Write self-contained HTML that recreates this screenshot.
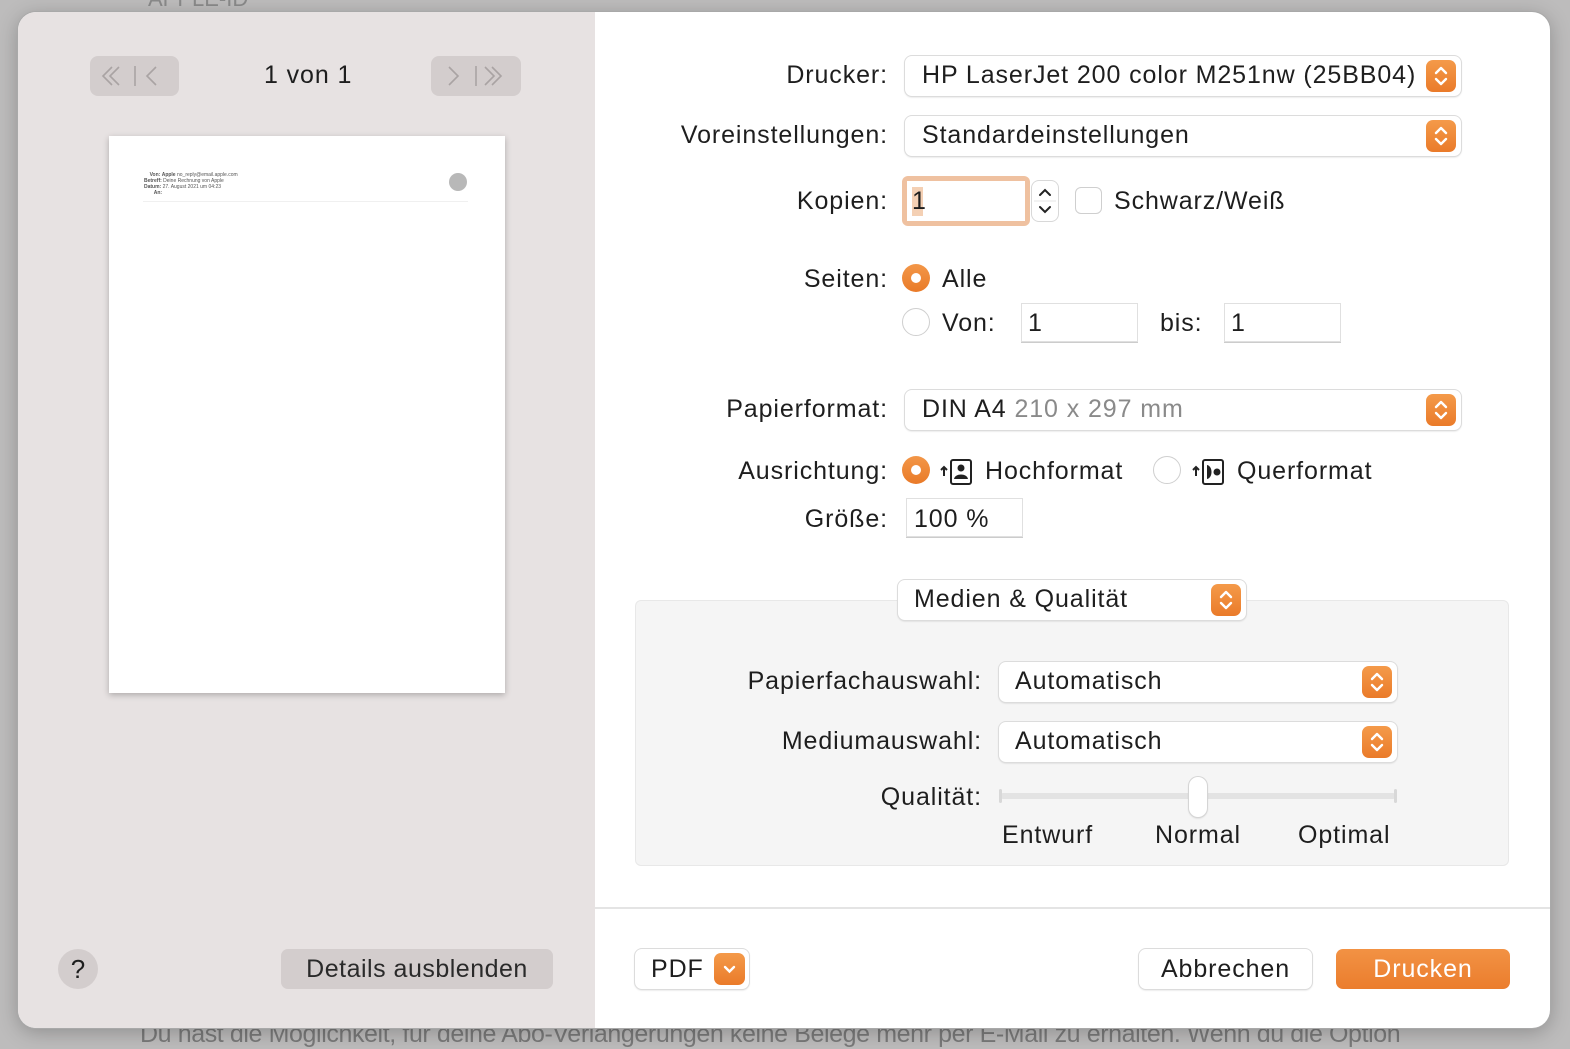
<!DOCTYPE html>
<html><head><meta charset="utf-8"><style>
*{box-sizing:border-box;margin:0;padding:0}
body{width:1570px;height:1048px;background:#bdbcbc;font-family:"Liberation Sans",sans-serif;color:#1e1e1e;position:relative;overflow:hidden}
.a{position:absolute;white-space:nowrap}
.t{font-size:25px;line-height:30px;letter-spacing:0.9px}
.r{text-align:right}
.win{position:absolute;left:18px;top:12px;width:1532px;height:1016px;border-radius:18px;background:#fff;overflow:hidden;box-shadow:0 0 0 1px #a9a9a9,0 4px 20px rgba(0,0,0,.25)}
.left{position:absolute;left:0;top:0;width:577px;height:1016px;background:#e7e2e2}
.pop{position:absolute;background:#fff;border-radius:7px;box-shadow:0 0 0 1px #dcdcdc,0 1px 2px rgba(0,0,0,.18)}
.st{position:absolute;width:30px;height:32px;border-radius:7px;background:linear-gradient(#f49a4a,#ea7b2a)}
.st svg{position:absolute;left:0;top:0}
.fld{position:absolute;background:#fff;border:1px solid #e0e0e0;box-shadow:0 1px 0 #ccc}
.rad{position:absolute;width:28px;height:28px;border-radius:50%}
.on{background:linear-gradient(#f39748,#e97a28)}
.on:after{content:"";position:absolute;left:9px;top:9px;width:10px;height:10px;border-radius:50%;background:#fff}
.off{background:#fff;border:1px solid #cfcfcf}
.btn{position:absolute;border-radius:7px;font-size:25px;line-height:40px;text-align:center;letter-spacing:0.9px}
</style></head><body>
<div class="a" style="left:148px;top:-14px;font-size:22px;color:#8a8a8a">APPLE-ID</div>
<div class="a" style="left:140px;top:1020px;font-size:25px;color:#7a7a7a;letter-spacing:-0.4px">Du hast die Möglichkeit, für deine Abo-Verlängerungen keine Belege mehr per E-Mail zu erhalten. Wenn du die Option</div>
<div class="win">
<div class="left"></div>
<div class="a" style="left:72px;top:44px;width:89px;height:40px;border-radius:8px;background:#d3cdcd"></div>
<svg class="a" style="left:72px;top:44px" width="89" height="40"><g stroke="#a9a3a3" stroke-width="1.6" fill="none"><path d="M22 11l-9 9 9 9M29 11l-9 9 9 9M66 11l-9 9 9 9"/><path d="M45 10v20"/></g></svg>
<div class="a" style="left:413px;top:44px;width:90px;height:40px;border-radius:8px;background:#d3cdcd"></div>
<svg class="a" style="left:413px;top:44px" width="90" height="40"><g stroke="#a9a3a3" stroke-width="1.6" fill="none"><path d="M18 11l9 9-9 9M54 11l9 9-9 9M61 11l9 9-9 9"/><path d="M45 10v20"/></g></svg>
<div class="a t" style="left:246px;top:48px;font-size:25px">1 von 1</div>
<div class="a" style="left:91px;top:124px;width:396px;height:557px;background:#fff;box-shadow:0 2px 6px rgba(0,0,0,.25)"></div>
<div class="a" style="left:126px;top:160px;font-size:5px;line-height:6px;color:#555">&nbsp;&nbsp;&nbsp;&nbsp;<b>Von:</b> <b>Apple</b> no_reply@email.apple.com<br><b>Betreff:</b> Deine Rechnung von Apple<br><b>Datum:</b> 27. August 2021 um 04:23<br>&nbsp;&nbsp;&nbsp;&nbsp;&nbsp;&nbsp;&nbsp;<b>An:</b></div>
<div class="a" style="left:431px;top:161px;width:18px;height:18px;border-radius:50%;background:#b8b8b8"></div>
<div class="a" style="left:125px;top:189px;width:325px;height:1px;background:#f0f0f0"></div>
<div class="a" style="left:40px;top:937px;width:40px;height:40px;border-radius:50%;background:#d3cdcd;font-size:26px;line-height:40px;text-align:center">?</div>
<div class="btn" style="left:263px;top:937px;width:272px;background:#d3cdcd;color:#2a2a2a;letter-spacing:0.5px">Details ausblenden</div>

<div class="a t r" style="left:500px;width:370px;top:48px">Drucker:</div>
<div class="pop" style="left:887px;top:44px;width:556px;height:40px"></div>
<div class="a t" style="left:904px;top:48px">HP LaserJet 200 color M251nw (25BB04)</div>
<div class="st" style="left:1408px;top:48px"><svg width="30" height="32"><path d="M10 13l5-5 5 5M10 19l5 5 5-5" stroke="#fff" stroke-width="2.4" fill="none" stroke-linecap="round" stroke-linejoin="round"/></svg></div>

<div class="a t r" style="left:500px;width:370px;top:108px">Voreinstellungen:</div>
<div class="pop" style="left:887px;top:104px;width:556px;height:40px"></div>
<div class="a t" style="left:904px;top:108px">Standardeinstellungen</div>
<div class="st" style="left:1408px;top:108px"><svg width="30" height="32"><path d="M10 13l5-5 5 5M10 19l5 5 5-5" stroke="#fff" stroke-width="2.4" fill="none" stroke-linecap="round" stroke-linejoin="round"/></svg></div>

<div class="a t r" style="left:500px;width:370px;top:174px">Kopien:</div>
<div class="a" style="left:884px;top:164px;width:128px;height:50px;border-radius:6px;background:#efc1a0"></div>
<div class="a" style="left:889px;top:169px;width:118px;height:40px;background:#fff"></div>
<div class="a" style="left:894px;top:175px;width:11px;height:29px;background:#f4d0b4"></div>
<div class="a t" style="left:894px;top:174px">1</div>
<div class="a" style="left:1014px;top:169px;width:26px;height:40px;border-radius:7px;background:#fff;box-shadow:0 0 0 1px #d8d8d8"></div>
<svg class="a" style="left:1014px;top:169px" width="26" height="40"><path d="M8 14l5-5 5 5M8 26l5 5 5-5" stroke="#222" stroke-width="2" fill="none" stroke-linecap="round"/><path d="M2 20h22" stroke="#e6e6e6"/></svg>
<div class="a" style="left:1057px;top:175px;width:27px;height:27px;border-radius:6px;background:#fff;border:1px solid #cfcfcf"></div>
<div class="a t" style="left:1096px;top:174px">Schwarz/Weiß</div>

<div class="a t r" style="left:500px;width:370px;top:252px">Seiten:</div>
<div class="rad on" style="left:884px;top:252px"></div>
<div class="a t" style="left:924px;top:252px">Alle</div>
<div class="rad off" style="left:884px;top:296px"></div>
<div class="a t" style="left:924px;top:296px">Von:</div>
<div class="fld" style="left:1003px;top:291px;width:117px;height:39px"></div>
<div class="a t" style="left:1010px;top:296px">1</div>
<div class="a t" style="left:1142px;top:296px">bis:</div>
<div class="fld" style="left:1206px;top:291px;width:117px;height:39px"></div>
<div class="a t" style="left:1213px;top:296px">1</div>

<div class="a t r" style="left:500px;width:370px;top:382px">Papierformat:</div>
<div class="pop" style="left:887px;top:378px;width:556px;height:40px"></div>
<div class="a t" style="left:904px;top:382px">DIN A4 <span style="color:#8a8a8a">210 x 297 mm</span></div>
<div class="st" style="left:1408px;top:382px"><svg width="30" height="32"><path d="M10 13l5-5 5 5M10 19l5 5 5-5" stroke="#fff" stroke-width="2.4" fill="none" stroke-linecap="round" stroke-linejoin="round"/></svg></div>

<div class="a t r" style="left:500px;width:370px;top:444px">Ausrichtung:</div>
<div class="rad on" style="left:884px;top:444px"></div>
<svg class="a" style="left:920px;top:444px" width="38" height="32"><path d="M6 20V11M3 14l3-3 3 3" stroke="#222" stroke-width="2" fill="none"/><rect x="13" y="4" width="20" height="24" rx="2" stroke="#222" stroke-width="2" fill="none"/><circle cx="23" cy="12" r="3.5" fill="#222"/><path d="M16 23c1-6 13-6 14 0z" fill="#222"/></svg>
<div class="a t" style="left:967px;top:444px">Hochformat</div>
<div class="rad off" style="left:1135px;top:444px"></div>
<svg class="a" style="left:1172px;top:444px" width="38" height="32"><path d="M6 20V11M3 14l3-3 3 3" stroke="#222" stroke-width="2" fill="none"/><rect x="13" y="4" width="20" height="24" rx="2" stroke="#222" stroke-width="2" fill="none"/><circle cx="27" cy="16" r="3.5" fill="#222"/><path d="M17 9c6 1 6 13 0 14z" fill="#222"/></svg>
<div class="a t" style="left:1219px;top:444px">Querformat</div>

<div class="a t r" style="left:500px;width:370px;top:492px">Größe:</div>
<div class="fld" style="left:888px;top:486px;width:117px;height:39px"></div>
<div class="a t" style="left:896px;top:492px">100 %</div>

<div class="a" style="left:617px;top:588px;width:874px;height:266px;background:#f5f5f5;border:1px solid #e8e8e8;border-radius:6px"></div>
<div class="pop" style="left:880px;top:568px;width:348px;height:40px"></div>
<div class="a t" style="left:896px;top:572px">Medien &amp; Qualität</div>
<div class="st" style="left:1193px;top:572px"><svg width="30" height="32"><path d="M10 13l5-5 5 5M10 19l5 5 5-5" stroke="#fff" stroke-width="2.4" fill="none" stroke-linecap="round" stroke-linejoin="round"/></svg></div>

<div class="a t r" style="left:600px;width:364px;top:654px">Papierfachauswahl:</div>
<div class="pop" style="left:981px;top:650px;width:398px;height:40px"></div>
<div class="a t" style="left:997px;top:654px">Automatisch</div>
<div class="st" style="left:1344px;top:654px"><svg width="30" height="32"><path d="M10 13l5-5 5 5M10 19l5 5 5-5" stroke="#fff" stroke-width="2.4" fill="none" stroke-linecap="round" stroke-linejoin="round"/></svg></div>

<div class="a t r" style="left:600px;width:364px;top:714px">Mediumauswahl:</div>
<div class="pop" style="left:981px;top:710px;width:398px;height:40px"></div>
<div class="a t" style="left:997px;top:714px">Automatisch</div>
<div class="st" style="left:1344px;top:714px"><svg width="30" height="32"><path d="M10 13l5-5 5 5M10 19l5 5 5-5" stroke="#fff" stroke-width="2.4" fill="none" stroke-linecap="round" stroke-linejoin="round"/></svg></div>

<div class="a t r" style="left:600px;width:364px;top:770px">Qualität:</div>
<div class="a" style="left:982px;top:781px;width:396px;height:6px;border-radius:3px;background:#e3e3e3"></div>
<div class="a" style="left:981px;top:777px;width:3px;height:14px;border-radius:2px;background:#d8d8d8"></div>
<div class="a" style="left:1376px;top:777px;width:3px;height:14px;border-radius:2px;background:#d8d8d8"></div>
<div class="a" style="left:1171px;top:765px;width:18px;height:40px;border-radius:9px;background:#fff;box-shadow:0 0 0 1px #d5d5d5,0 1px 2px rgba(0,0,0,.2)"></div>
<div class="a t" style="left:984px;top:808px">Entwurf</div>
<div class="a t" style="left:1137px;top:808px">Normal</div>
<div class="a t" style="left:1280px;top:808px">Optimal</div>

<div class="a" style="left:577px;top:895px;width:955px;height:2px;background:#e4e4e4"></div>
<div class="pop" style="left:617px;top:937px;width:114px;height:40px"></div>
<div class="a t" style="left:633px;top:942px">PDF</div>
<div class="a" style="left:696px;top:941px;width:31px;height:32px;border-radius:7px;background:linear-gradient(#f49a4a,#ea7b2a)"></div>
<svg class="a" style="left:696px;top:941px" width="31" height="32"><path d="M11 14l4.5 4.5 4.5-4.5" stroke="#fff" stroke-width="2.4" fill="none" stroke-linecap="round"/></svg>
<div class="pop" style="left:1121px;top:937px;width:173px;height:40px"></div>
<div class="a t" style="left:1121px;top:942px;width:173px;text-align:center">Abbrechen</div>
<div class="btn" style="left:1318px;top:937px;width:174px;background:linear-gradient(#f29244,#eb7d2d);color:#fff">Drucken</div>
</div>
</body></html>
